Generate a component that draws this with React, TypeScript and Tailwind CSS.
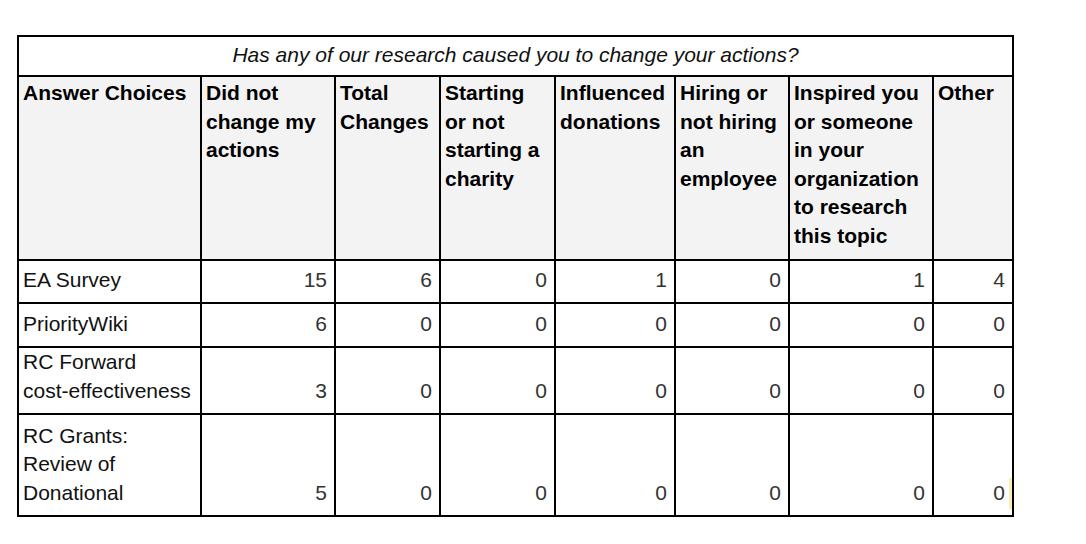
// Survey result table: research impact on respondent actions

const columns = [
  { lines: ["Answer Choices"], width: "w-[183px]" },
  { lines: ["Did not", "change my", "actions"], width: "w-[134px]" },
  { lines: ["Total", "Changes"], width: "w-[105px]" },
  { lines: ["Starting", "or not", "starting a", "charity"], width: "w-[115px]" },
  { lines: ["Influenced", "donations"], width: "w-[120px]" },
  { lines: ["Hiring or", "not hiring", "an", "employee"], width: "w-[114px]" },
  {
    lines: ["Inspired you", "or someone", "in your", "organization", "to research", "this topic"],
    width: "w-[144px]",
  },
  { lines: ["Other"], width: "w-[80px]" },
];

const rows = [
  { name: ["EA Survey"], height: "h-[43px]", values: [15, 6, 0, 1, 0, 1, 4] },
  { name: ["PriorityWiki"], height: "h-[44px]", values: [6, 0, 0, 0, 0, 0, 0] },
  { name: ["RC Forward", "cost-effectiveness"], height: "h-[66px]", values: [3, 0, 0, 0, 0, 0, 0] },
  { name: ["RC Grants:", "Review of", "Donational"], height: "h-[102px]", values: [5, 0, 0, 0, 0, 0, 0] },
];

function Lines({ lines }: { lines: string[] }) {
  return (
    <>
      {lines.map((l, i) => (
        <div key={i} className="whitespace-nowrap">
          {l}
        </div>
      ))}
    </>
  );
}

export default function App() {
  return (
    <div className="w-[1086px] h-[544px] bg-white pt-[35px] pl-[17px] font-['Liberation_Sans',Arial,sans-serif]">
      <table className="border-collapse table-fixed border-2 border-black text-[21px] leading-[28.5px]">
        <colgroup>
          {columns.map((c) => (
            <col key={c.lines.join(" ")} className={c.width} />
          ))}
        </colgroup>
        <thead>
          <tr className="h-[40px]">
            <th
              colSpan={8}
              className="border-2 border-black font-normal italic text-[#111] text-center align-middle pb-[2px]"
            >
              Has any of our research caused you to change your actions?
            </th>
          </tr>
          <tr className="h-[184px] bg-[#f3f3f3]">
            {columns.map((c) => (
              <th
                key={c.lines.join(" ")}
                className="border-2 border-black font-bold text-black text-left align-top px-[4px] pt-[2px]"
              >
                <Lines lines={c.lines} />
              </th>
            ))}
          </tr>
        </thead>
        <tbody>
          {rows.map((r, ri) => (
            <tr key={r.name.join(" ")} className={r.height}>
              <td className="border-2 border-black text-[#111] align-bottom px-[4px] pb-[8px]">
                <Lines lines={r.name} />
              </td>
              {r.values.map((v, i) => (
                <td
                  key={i}
                  className="relative border-2 border-black text-[#333] text-right align-bottom pr-[7px] pb-[8px]"
                >
                  {v}
                  {ri === rows.length - 1 && i === r.values.length - 1 && (
                    <span className="absolute right-[0px] bottom-[6px] w-[3px] h-[31px] bg-[#fdebb5]" />
                  )}
                </td>
              ))}
            </tr>
          ))}
        </tbody>
      </table>
    </div>
  );
}
